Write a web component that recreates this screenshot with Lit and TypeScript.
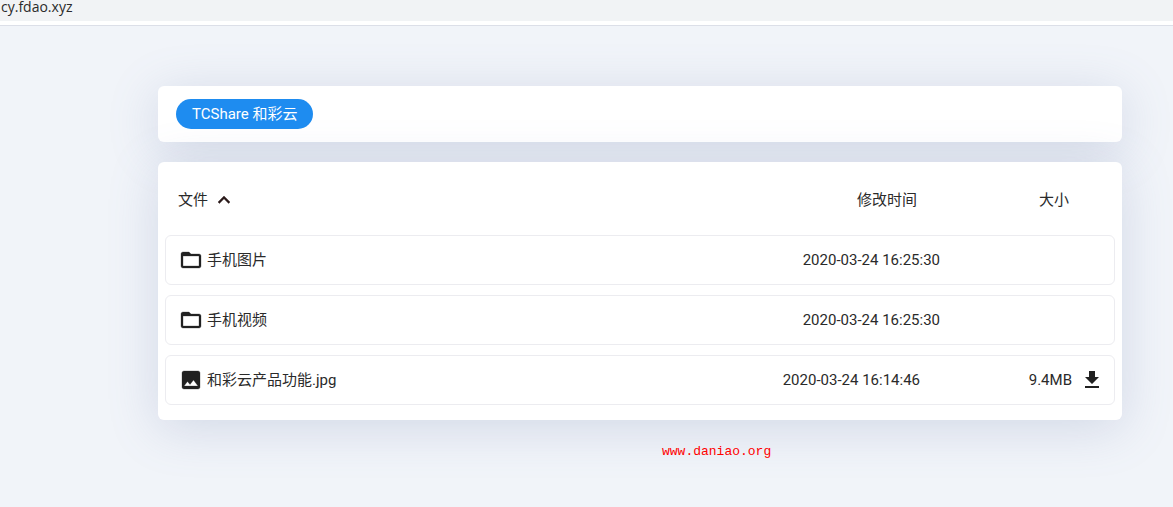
import { LitElement, html, css, svg } from "lit";
import { customElement } from "lit/decorators.js";

const folder = svg`<path d="M20 6h-8l-2-2H4c-1.1 0-1.99.9-1.99 2L2 18c0 1.1.9 2 2 2h16c1.1 0 2-.9 2-2V8c0-1.1-.9-2-2-2zm0 12H4V8h16v10z"/>`;
const image = svg`<path d="M21 19V5c0-1.1-.9-2-2-2H5c-1.1 0-2 .9-2 2v14c0 1.1.9 2 2 2h14c1.1 0 2-.9 2-2zM8.5 13.5l2.5 3.01L14.5 12l4.5 6H5l3.5-4.5z"/>`;
const download = svg`<path d="M19 9h-4V3H9v6H5l7 7 7-7zM5 18v2h14v-2H5z"/>`;
const chevron = svg`<path d="M7.41 15.41 12 10.83l4.59 4.58L18 14l-6-6-6 6z"/>`;

const rows = [
  { icon: folder, name: "手机图片", time: "2020-03-24 16:25:30", size: "" },
  { icon: folder, name: "手机视频", time: "2020-03-24 16:25:30", size: "" },
  { icon: image, name: "和彩云产品功能.jpg", time: "2020-03-24 16:14:46", size: "9.4MB" },
];

@customElement("app-root")
export class AppRoot extends LitElement {
  static styles = css`
    :host {
      display: block;
      height: 507px;
      overflow: hidden;
      background: #f1f4f9;
      font-family: Roboto, "Noto Sans CJK SC", sans-serif;
      font-size: 15px;
      color: #2a2a2a;
    }
    .url {
      height: 21px;
      box-sizing: border-box;
      background: #f1f3f5;
      font-size: 14px;
      line-height: 14px;
      padding-left: 1px;
      color: #2b2b2b;
      font-family: "Open Sans", "Noto Sans", sans-serif;
    }
    .gap {
      height: 4px;
      background: #fff;
      border-bottom: 1px solid #dcdfe8;
    }
    .main {
      width: 964px;
      margin-left: 158px;
      padding-top: 60px;
    }
    .card {
      background: #fff;
      border-radius: 6px;
      box-shadow: 0 8px 50px rgba(100, 120, 170, 0.22);
    }
    .crumbs {
      height: 56px;
      box-sizing: border-box;
      padding: 13px 18px;
    }
    .pill {
      display: inline-flex;
      align-items: center;
      height: 30px;
      box-sizing: border-box;
      padding: 0 16px 3px 16px;
      border-radius: 15px;
      background: #1e8cf0;
      color: #fff;
      font-size: 15px;
    }
    .list {
      margin-top: 20px;
      height: 258px;
      box-sizing: border-box;
      padding: 0 7px;
    }
    .head {
      height: 73px;
      display: flex;
      align-items: center;
      padding-top: 3px;
      box-sizing: border-box;
    }
    .hname {
      flex: 1;
      display: flex;
      align-items: center;
      gap: 4px;
      padding-left: 13px;
    }
    .htext {
      margin-bottom: 3px;
    }
    .chev {
      width: 24px;
      height: 24px;
      fill: #2a1a1a;
      stroke: #2a1a1a;
      stroke-width: 0.4;
    }
    .htime {
      width: 60px;
      text-align: center;
      margin-right: 122px;
    }
    .hsize {
      width: 30px;
      margin-right: 46px;
    }
    .row {
      height: 50px;
      box-sizing: border-box;
      border: 1px solid #ececf0;
      border-radius: 6px;
      display: flex;
      align-items: center;
      margin-bottom: 10px;
      padding-left: 13px;
    }
    .ico {
      width: 24px;
      height: 24px;
      fill: #212121;
      stroke: #212121;
      stroke-width: 0.3;
      flex: none;
    }
    .name {
      flex: 1;
      margin-left: 4px;
      padding-bottom: 3px;
    }
    .side {
      width: 174px;
      display: flex;
      align-items: center;
      justify-content: flex-end;
      flex: none;
    }
    .side.has-size {
      width: 194px;
    }
    .size {
      margin-right: 8px;
    }
    .dl {
      width: 24px;
      height: 24px;
      fill: #212121;
      margin-right: 10px;
    }
    .mark {
      margin: 24px 0 0 504px;
      font-family: "Liberation Mono", "DejaVu Sans Mono", monospace;
      font-size: 13px;
      line-height: 16px;
      color: #f00;
    }
  `;

  render() {
    return html`
      <div class="url">cy.fdao.xyz</div>
      <div class="gap"></div>
      <div class="main">
        <div class="card crumbs"><span class="pill">TCShare 和彩云</span></div>
        <div class="card list">
          <div class="head">
            <div class="hname">
              <span class="htext">文件</span>
              <svg class="chev" viewBox="0 0 24 24">${chevron}</svg>
            </div>
            <div class="htime htext">修改时间</div>
            <div class="hsize htext">大小</div>
          </div>
          ${rows.map(
            (r) => html`
              <div class="row">
                <svg class="ico" viewBox="0 0 24 24">${r.icon}</svg>
                <div class="name">${r.name}</div>
                <div class="time">${r.time}</div>
                <div class="side ${r.size ? "has-size" : ""}">
                  ${r.size
                    ? html`<span class="size">${r.size}</span>
                        <svg class="dl" viewBox="0 0 24 24">${download}</svg>`
                    : ""}
                </div>
              </div>
            `
          )}
        </div>
        <div class="mark">www.daniao.org</div>
      </div>
    `;
  }
}
